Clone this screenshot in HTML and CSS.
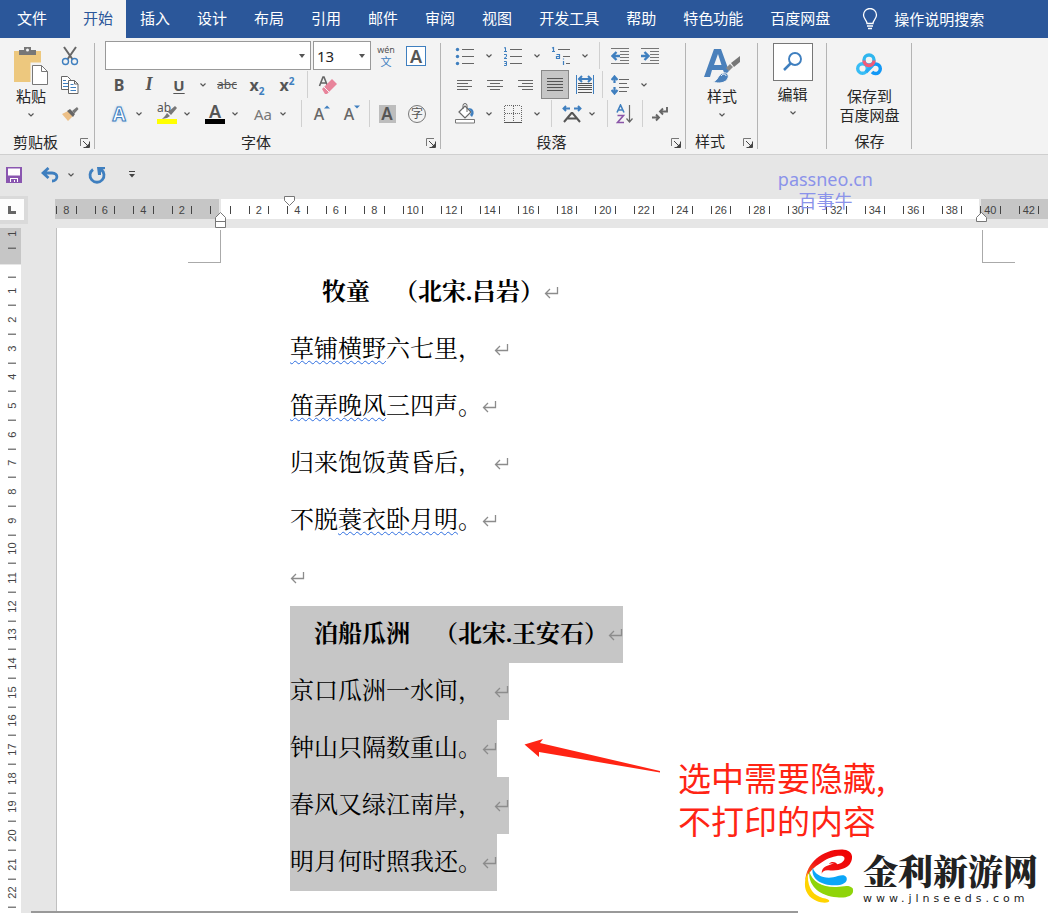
FILE: index.html
```html
<!DOCTYPE html>
<html lang="zh-CN">
<head>
    <meta charset="UTF-8">
    <meta name="viewport" content="width=device-width, initial-scale=1.0">
    <title>Word</title>
    <link rel="stylesheet" href="styles.css">
</head>
<body>

<!-- shared symbols -->
<svg class="symbols" width="0" height="0" aria-hidden="true">
    <symbol id="chevron" viewBox="0 0 6 4"><path d="M0.5 0.5 3 3 5.500 0.500" fill="none" stroke="#555" stroke-width="1.200"/></symbol>
    <symbol id="launcher" viewBox="0 0 10 10"><path d="M0.500 8V.5H8" fill="none" stroke="#777"/><path d="M3 3l5 5M9.500 3.500v6h-6" fill="none" stroke="#444"/><path d="M9 9H5.500L9 5.500z" fill="#444"/></symbol>
    <symbol id="pmark" viewBox="0 0 15 14"><path d="M13.500 1v6.500H1.500M6 3 1.500 7.500 6 12" fill="none" stroke="#8c8c8c" stroke-width="1.300"/></symbol>
</svg>

<nav class="tabs">
    <a class="tab file" href="#">文件</a>
    <a class="tab active" href="#">开始</a>
    <a class="tab" href="#">插入</a>
    <a class="tab" href="#">设计</a>
    <a class="tab" href="#">布局</a>
    <a class="tab" href="#">引用</a>
    <a class="tab" href="#">邮件</a>
    <a class="tab" href="#">审阅</a>
    <a class="tab" href="#">视图</a>
    <a class="tab" href="#">开发工具</a>
    <a class="tab" href="#">帮助</a>
    <a class="tab" href="#">特色功能</a>
    <a class="tab" href="#">百度网盘</a>
    <a class="tab tell-me" href="#">
        <svg width="16" height="22" viewBox="0 0 16 22" fill="none" stroke="#fff" stroke-width="1.300"><path d="M5 15.500C5 12 1.500 11 1.500 7a6.500 6.500 0 0 1 13 0c0 4-3.500 5-3.500 8.500zM5 18h6M6 20.500h4"/></svg>
        操作说明搜索
    </a>
</nav>

<div class="ribbon">
    <section class="group clipboard">
        <div class="tools">
            <button class="big" type="button">
                <svg width="36" height="40" viewBox="0 0 36 40"><path d="M1 5h27v31H1z" fill="#edc87e"/><path d="M6 9V4h5V1h7v3h5v5z" fill="#777"/><circle cx="14.500" cy="4" r="1.500" fill="#f3f3f3"/><path d="M19 18h10l6 6v15H19z" fill="#fff" stroke="#f3f3f3" stroke-width="3"/><path d="M19.500 19.500h9l6 6v13h-15zM28.500 19.500v6h6" fill="#fff" stroke="#777"/></svg>
                <span>粘贴</span>
                <svg class="chev" width="6" height="4"><use href="#chevron"/></svg>
            </button>
            <div class="stack">
                <button class="ic" type="button" aria-label="剪切"><svg width="18" height="20" viewBox="0 0 18 20"><path d="M3 1l9 13M15 1L6 14" stroke="#666" stroke-width="2"/><circle cx="4.500" cy="15.500" r="3" fill="#f3f3f3" stroke="#3f7fbf" stroke-width="1.400"/><circle cx="13.500" cy="15.500" r="3" fill="#f3f3f3" stroke="#3f7fbf" stroke-width="1.400"/></svg></button>
                <button class="ic" type="button" aria-label="复制"><svg width="18" height="18" viewBox="0 0 18 18" fill="#fff" stroke="#666"><path d="M.5.5h6l3 3v10h-9z"/><path d="M2 4.500h3M2 7.500h5M2 10.500h5" stroke="#3f7fbf"/><path d="M7.500 4.500h6l3.500 3.500v9.500H7.500zM13.500 4.500v3.500H17"/><path d="M9.500 8.500h3M9.500 11.500h5.500M9.500 14.500h5.500" stroke="#3f7fbf"/></svg></button>
                <button class="ic" type="button" aria-label="格式刷"><svg width="18" height="16" viewBox="0 0 18 16"><path d="M1 8l6-3 5 5-5 5z" fill="#edc087"/><path d="M6 5l3-2 5 5-2 3z" fill="#666"/><path d="M11 5l5-4 1.500 2-4 4.500z" fill="#777"/></svg></button>
            </div>
        </div>
        <div class="caption"><span>剪贴板</span><button class="launch" type="button" aria-label="剪贴板设置"><svg width="10" height="10"><use href="#launcher"/></svg></button></div>
    </section>

    <section class="group font">
        <div class="rows">
            <div class="row">
                <span class="combo name"><select aria-label="字体"><option></option></select></span>
                <span class="combo size"><select aria-label="字号"><option>13</option></select></span>
                <button class="ic pinyin" type="button"><small>wén</small><b>文</b></button>
                <button class="ic" type="button"><span class="boxed">A</span></button>
            </div>
            <div class="row">
                <button class="ic bold" type="button">B</button>
                <button class="ic italic" type="button">I</button>
                <button class="ic under" type="button">U</button>
                <button class="arrow" type="button" aria-label="下划线"><svg width="6" height="4"><use href="#chevron"/></svg></button>
                <button class="ic strike" type="button">abc</button>
                <button class="ic script" type="button"><span>x<sub>2</sub></span></button>
                <button class="ic script" type="button"><span>x<sup>2</sup></span></button>
                <i class="sep"></i>
                <button class="ic" type="button" aria-label="清除格式"><svg width="20" height="20" viewBox="0 0 20 20"><path d="M1.500 11L5 2h1l3.500 9M3 8h5" fill="none" stroke="#666" stroke-width="1.600"/><path d="M4 14l10-10 5 5-10 10H7z" fill="#e8849b"/><path d="M6 12l5 5" stroke="#f3f3f3"/></svg></button>
            </div>
            <div class="row tight">
                <button class="ic glow" type="button">A</button>
                <button class="arrow" type="button" aria-label="文本效果"><svg width="6" height="4"><use href="#chevron"/></svg></button>
                <button class="ic" type="button"><span class="marker">ab<svg width="15" height="13" viewBox="0 0 15 13"><path d="M6 6l7-6 2 2-6 7z" fill="#777"/><path d="M5 7l3 3-3 2-5 1 3-3z" fill="#777"/></svg></span></button>
                <button class="arrow" type="button" aria-label="突出显示颜色"><svg width="6" height="4"><use href="#chevron"/></svg></button>
                <button class="ic" type="button"><span class="color">A</span></button>
                <button class="arrow" type="button" aria-label="字体颜色"><svg width="6" height="4"><use href="#chevron"/></svg></button>
                <button class="ic case" type="button">Aa</button>
                <button class="arrow" type="button" aria-label="更改大小写"><svg width="6" height="4"><use href="#chevron"/></svg></button>
                <i class="sep"></i>
                <button class="ic grow" type="button">A<svg width="6" height="4" viewBox="0 0 6 4"><path d="M0 3.500 3 .5l3 3z" fill="#3f7fbf"/></svg></button>
                <button class="ic grow" type="button">A<svg width="6" height="4" viewBox="0 0 6 4"><path d="M0 .5l3 3 3-3z" fill="#3f7fbf"/></svg></button>
                <i class="sep narrow"></i>
                <button class="ic" type="button"><span class="shade">A</span></button>
                <button class="ic" type="button"><span class="circled">字</span></button>
            </div>
        </div>
        <div class="caption"><span>字体</span><button class="launch" type="button" aria-label="字体设置"><svg width="10" height="10"><use href="#launcher"/></svg></button></div>
    </section>

    <section class="group paragraph">
        <div class="rows">
            <div class="row">
                <button class="ic" type="button" aria-label="项目符号"><svg width="20" height="20" viewBox="0 0 20 20"><path d="M7 3.500h12M7 10.500h12M7 17.500h12" stroke="#666"/><g fill="#3f7fbf"><circle cx="2.500" cy="3.500" r="1.700"/><circle cx="2.500" cy="10.500" r="1.700"/><circle cx="2.500" cy="17.500" r="1.700"/></g></svg></button>
                <button class="arrow" type="button" aria-label="项目符号库"><svg width="6" height="4"><use href="#chevron"/></svg></button>
                <button class="ic" type="button" aria-label="编号"><svg width="20" height="20" viewBox="0 0 20 20"><path d="M7 3.500h12M7 10.500h12M7 17.500h12" stroke="#666"/><path d="M1 2l1.500-.5V5M1 5.500h3M1 8.500h2.500v2L1 12.500h3M1 15.500h2.500v4H1M1.500 17.500h2" fill="none" stroke="#3f7fbf"/></svg></button>
                <button class="arrow" type="button" aria-label="编号库"><svg width="6" height="4"><use href="#chevron"/></svg></button>
                <button class="ic" type="button" aria-label="多级列表"><svg width="20" height="20" viewBox="0 0 20 20"><path d="M7 3.500h12M12 10.500h7M15 17.500h4" stroke="#666"/><path d="M1 2l1.500-.5V5M1 5.500h3M5.500 8.500h3v4h-3v-2h3M12.500 15v4M12.500 12.500v1" fill="none" stroke="#3f7fbf" stroke-width="1.200"/></svg></button>
                <button class="arrow" type="button" aria-label="多级列表库"><svg width="6" height="4"><use href="#chevron"/></svg></button>
                <i class="sep"></i>
                <button class="ic" type="button" aria-label="减少缩进"><svg width="18" height="18" viewBox="0 0 18 18"><path d="M0 1.500h18M9 4.500h9M9 7.500h9M9 10.500h9M9 13.500h9M0 16.500h18" stroke="#777"/><path d="M9 9H2M5.500 5L1.500 9l4 4" fill="none" stroke="#3f7fbf" stroke-width="2.400"/></svg></button>
                <button class="ic" type="button" aria-label="增加缩进"><svg width="18" height="18" viewBox="0 0 18 18"><path d="M0 1.500h18M9 4.500h9M9 7.500h9M9 10.500h9M9 13.500h9M0 16.500h18" stroke="#777"/><path d="M0 9h7M3.500 5l4 4-4 4" fill="none" stroke="#3f7fbf" stroke-width="2.400"/></svg></button>
            </div>
            <div class="row">
                <button class="ic" type="button" aria-label="左对齐"><svg width="16" height="12" viewBox="0 0 16 12"><path d="M0 1.500h15M0 4.500h11M0 7.500h15M0 10.500h11" stroke="#666"/></svg></button>
                <button class="ic" type="button" aria-label="居中"><svg width="16" height="12" viewBox="0 0 16 12"><path d="M0 1.500h16M3 4.500h10M0 7.500h16M3 10.500h10" stroke="#666"/></svg></button>
                <button class="ic" type="button" aria-label="右对齐"><svg width="16" height="12" viewBox="0 0 16 12"><path d="M1 1.500h15M5 4.500h11M1 7.500h15M5 10.500h11" stroke="#666"/></svg></button>
                <button class="ic pressed" type="button" aria-label="两端对齐"><svg width="16" height="14" viewBox="0 0 16 14"><path d="M0 .5h16M0 3.500h16M0 6.500h16M0 9.500h16M0 12.500h16" stroke="#555"/></svg></button>
                <button class="ic" type="button" aria-label="分散对齐"><svg width="18" height="19" viewBox="0 0 18 19"><path d="M.5 0v19M17.500 0v19" stroke="#3f7fbf"/><path d="M2 8.500h14M2 10.500h14M2 12.500h14M2 14.500h14M2 17.500h14" stroke="#555"/><path d="M3 4h12M6 1L3 4l3 3M12 1l3 3-3 3" fill="none" stroke="#3f7fbf" stroke-width="2"/></svg></button>
                <i class="sep narrow"></i>
                <button class="ic" type="button" aria-label="行距"><svg width="18" height="20" viewBox="0 0 18 20"><path d="M8 4.500h10M8 8.500h8M8 12.500h10M8 16.500h8" stroke="#666"/><path d="M3.500 2v6M3.500 12v6M.5 5l3-3.500 3 3.500M.5 15l3 3.500 3-3.500" fill="none" stroke="#3f7fbf" stroke-width="2.200"/></svg></button>
                <button class="arrow" type="button" aria-label="行距选项"><svg width="6" height="4"><use href="#chevron"/></svg></button>
            </div>
            <div class="row">
                <button class="ic" type="button" aria-label="底纹"><svg width="21" height="21" viewBox="0 0 21 21"><path d="M.5 16.500h19v3.500H.5z" fill="#fff" stroke="#777"/><path d="M4 9l6-6 6 6-6 6z" fill="#fff" stroke="#666" stroke-width="1.200"/><path d="M8 6V2.500a2 2 0 0 1 4 0V9" fill="none" stroke="#666"/><path d="M13 5c5 0 6 3 5.500 6L17 14l-2-2 1.500-3z" fill="#3f7fbf"/></svg></button>
                <button class="arrow" type="button" aria-label="底纹颜色"><svg width="6" height="4"><use href="#chevron"/></svg></button>
                <button class="ic" type="button" aria-label="边框"><svg width="18" height="18" viewBox="0 0 18 18"><path d="M1 .5h16M.5 1v16M17.500 1v16M9.500 1v16M1 8.500h16" stroke="#666" stroke-dasharray="1 1"/><path d="M0 17.500h18" stroke="#555"/></svg></button>
                <button class="arrow" type="button" aria-label="边框选项"><svg width="6" height="4"><use href="#chevron"/></svg></button>
                <i class="sep"></i>
                <button class="ic" type="button" aria-label="中文版式"><svg width="20" height="18" viewBox="0 0 20 18"><path d="M2 17l7.500-9h1L18 17M5.500 13.500h9" fill="none" stroke="#555" stroke-width="2"/><path d="M8 3.500H2M4 1L1.500 3.500 4 6M12 3.500h6M16 1l2.500 2.500L16 6" fill="none" stroke="#3f7fbf" stroke-width="1.900"/></svg></button>
                <button class="arrow pull" type="button" aria-label="中文版式选项"><svg width="6" height="4"><use href="#chevron"/></svg></button>
                <i class="sep narrow"></i>
                <button class="ic" type="button" aria-label="排序"><svg width="18" height="20" viewBox="0 0 18 20" fill="none" stroke-width="1.600"><path d="M1 8.500L4.500 1 8 8.500M2 6h5" stroke="#3f7fbf"/><path d="M1.500 11.500h6l-6 7h6.500" stroke="#8a56a8"/><path d="M13.500 1v17M10.500 14.500l3 3.500 3-3.500" stroke="#666" stroke-width="1.200"/></svg></button>
                <i class="sep narrow"></i>
                <button class="ic" type="button" aria-label="显示编辑标记"><svg width="18" height="16" viewBox="0 0 18 16" fill="none" stroke="#666" stroke-width="1.900"><path d="M16 1v4.500H9M12 2.500l-3 3 3 3M1 11.500h7M5 8.500l3 3-3 3"/></svg></button>
            </div>
        </div>
        <div class="caption"><span>段落</span><button class="launch" type="button" aria-label="段落设置"><svg width="10" height="10"><use href="#launcher"/></svg></button></div>
    </section>

    <section class="group styles">
        <div class="tools">
            <button class="big" type="button">
                <svg width="36" height="40" viewBox="0 0 36 40"><path d="M0 31L10 3h7l8 22-4 4-2-5H8l-2 7zM10 19h7.500L14 8z" fill="#4a80bb"/><path d="M22 22l4-4 3 3-4 4z" fill="#888"/><path d="M27 17l9-7v6l-6 5z" fill="#777"/><path d="M9 36c5-1 5-8 10-9 4-1 6 2 5 5-2 5-9 6-15 4z" fill="#4a80bb" stroke="#f3f3f3"/><path d="M17 30c2-3 5-2 5 0" fill="none" stroke="#fff"/></svg>
                <span>样式</span>
                <svg class="chev" width="6" height="4"><use href="#chevron"/></svg>
            </button>
        </div>
        <div class="caption"><span>样式</span><button class="launch" type="button" aria-label="样式设置"><svg width="10" height="10"><use href="#launcher"/></svg></button></div>
    </section>

    <section class="group editing">
        <div class="tools">
            <button class="big find" type="button">
                <svg class="framed" width="40" height="38" viewBox="0 0 40 38"><circle cx="22" cy="16" r="6" fill="none" stroke="#3f7fbf" stroke-width="1.900"/><path d="M17.500 20.500L11 27" stroke="#3f7fbf" stroke-width="2.500"/></svg>
                <span>编辑</span>
                <svg class="chev" width="6" height="4"><use href="#chevron"/></svg>
            </button>
        </div>
    </section>

    <section class="group save">
        <div class="tools">
            <button class="big" type="button">
                <svg width="28" height="40" viewBox="0 0 28 40" fill="none" stroke-width="3.400"><circle cx="7.500" cy="22.500" r="4.800" stroke="#38bdf5"/><path d="M17 19.500a4.800 4.800 0 1 1 0 6.500" stroke="#1298f6"/><path d="M11 26l6.500-6.500" stroke="#25abf5"/><circle cx="14" cy="14" r="5" stroke="#2fb6ee"/><path d="M9 14.500a5 5 0 0 0 10 0" stroke="#f25a78"/></svg>
                <span>保存到<br>百度网盘</span>
            </button>
        </div>
        <div class="caption"><span>保存</span></div>
    </section>
</div>

<div class="quick">
    <button class="ic" type="button" aria-label="保存文件"><svg width="16" height="16" viewBox="0 0 16 16"><path d="M0 0h16v16H0z" fill="#8a56b0"/><path d="M2 1.500h12v7H2zM4 11h8v4H4z" fill="#fff"/><path d="M5 12h6v3H9v-2H8v2H5z" fill="#8a56b0"/></svg></button>
    <button class="ic undo" type="button" aria-label="撤消"><svg width="18" height="16" viewBox="0 0 18 16"><path d="M2 6h9c7 0 6 8 0 8M7.500 1L2 6l5.500 5" fill="none" stroke="#3f7fbf" stroke-width="2.800"/></svg></button>
    <button class="arrow" type="button" aria-label="撤消列表"><svg width="6" height="4"><use href="#chevron"/></svg></button>
    <button class="ic" type="button" aria-label="重复"><svg width="18" height="18" viewBox="0 0 18 18"><path d="M5 3.500a7 7 0 1 0 8 0" fill="none" stroke="#3f7fbf" stroke-width="2.800"/><path d="M9 1h8v2l-4 1v5H10z" fill="#3f7fbf"/></svg></button>
    <button class="ic more" type="button" aria-label="自定义快速访问工具栏"><svg width="6" height="7" viewBox="0 0 6 7"><path d="M0 .5h6" stroke="#444"/><path d="M0 3h6L3 6.500z" fill="#444"/></svg></button>
</div>

<div class="ruler-row">
    <button class="corner" type="button" aria-label="制表符"><svg width="8" height="8" viewBox="0 0 8 8"><path d="M1.500 0v6.500H8" fill="none" stroke="#666" stroke-width="3"/></svg></button>
    <div class="ruler">
        <div class="scale">
            <span>8</span><span>6</span><span>4</span><span>2</span><span></span><span>2</span><span>4</span><span>6</span><span>8</span><span>10</span><span>12</span><span>14</span><span>16</span><span>18</span><span>20</span><span>22</span><span>24</span><span>26</span><span>28</span><span>30</span><span>32</span><span>34</span><span>36</span><span>38</span><span>40</span><span>42</span>
        </div>
        <svg class="stop first" width="12" height="11" viewBox="0 0 12 11"><path d="M.5.5h10v4l-5 5-5-5z" fill="#fff" stroke="#777"/></svg>
        <svg class="stop left" width="12" height="17" viewBox="0 0 12 17"><path d="M.5 15.500v-10l5-5 5 5v10zM.5 9.500h10" fill="#fff" stroke="#777"/></svg>
        <svg class="stop right" width="12" height="11" viewBox="0 0 12 11"><path d="M.5 9.500v-4l5-5 5 5v4z" fill="#fff" stroke="#777"/></svg>
        <div class="mark"><span>passneo.cn</span><span>百事牛</span></div>
    </div>
</div>

<main class="workspace">
    <div class="v-ruler">
        <div class="v-scale">
            <span>1</span><span></span><span>1</span><span>2</span><span>3</span><span>4</span><span>5</span><span>6</span><span>7</span><span>8</span><span>9</span><span>10</span><span>11</span><span>12</span><span>13</span><span>14</span><span>15</span><span>16</span><span>17</span><span>18</span><span>19</span><span>20</span><span>21</span><span>22</span>
        </div>
    </div>
    <div class="canvas">
        <article class="page">
            <div class="crops"><i></i><i></i></div>
            <div class="text">
                <h2 class="indent">牧童　（北宋.吕岩）<svg width="15" height="14"><use href="#pmark"/></svg></h2>
                <p><u>草铺横野</u>六七里，  <svg width="15" height="14"><use href="#pmark"/></svg></p>
                <p><u>笛弄晚风</u>三四声。<svg width="15" height="14"><use href="#pmark"/></svg></p>
                <p>归来饱饭黄昏后，  <svg width="15" height="14"><use href="#pmark"/></svg></p>
                <p>不脱<u>蓑衣卧月明</u>。<svg width="15" height="14"><use href="#pmark"/></svg></p>
                <p><svg width="15" height="14"><use href="#pmark"/></svg></p>
                <h2 class="selected">　泊船瓜洲　（北宋.王安石）<svg width="15" height="14"><use href="#pmark"/></svg></h2>
                <p class="selected">京口瓜洲一水间，  <svg width="15" height="14"><use href="#pmark"/></svg></p>
                <p class="selected">钟山只隔数重山。<svg width="15" height="14"><use href="#pmark"/></svg></p>
                <p class="selected">春风又绿江南岸，  <svg width="15" height="14"><use href="#pmark"/></svg></p>
                <p class="selected">明月何时照我还。<svg width="15" height="14"><use href="#pmark"/></svg></p>
            </div>
            <svg class="pointer" width="137" height="36" viewBox="0 0 137 36"><path d="M.5 6.500L19 1l-3 4 120 28v1.500L15 14v5z" fill="#ff2414"/></svg>
            <div class="note">选中需要隐藏,<br>不打印的内容</div>
        </article>
        <div class="edge"></div>
        <div class="logo">
            <svg width="50" height="54" viewBox="0 0 150 162">
                <defs><linearGradient id="flame" x1="0" y1="1" x2="1" y2="0"><stop offset="0" stop-color="#ff7a1a"/><stop offset=".4" stop-color="#f01414"/><stop offset="1" stop-color="#f00000"/></linearGradient></defs>
                <path d="M4 96C6 40 60-2 120 2c30 3 28 30 16 45-13 16-44 18-66 17-10 0-14 5-17 10 0-12 4-18 13-22l24-9-16 1c9-8 20-6 26 2 12-2 26-14 20-22-8-9-44 0-64 14C27 56 12 70 4 96z" fill="url(#flame)"/>
                <path d="M12 70c-4 46 16 70 44 77 12 2 20 5 20 9-2 7-24 6-38 0C2 141-6 106 12 70z" fill="#ffd400"/>
                <path d="M16 66c8 34 42 50 82 48 18-1 37-8 48 4 7 22-17 30-47 27C43 141 11 106 16 66z" fill="#8fd40a"/>
                <path d="M26 56c8 22 32 34 62 29 14-3 32-13 40 1 3 14-11 23-38 23C54 108 20 92 26 56z" fill="#0ba6f8"/>
            </svg>
            <div class="logo-text"><strong>金利新游网</strong><span>www.jlnseeds.com</span></div>
        </div>
    </div>
</main>

</body>
</html>
```

FILE: styles.css
```css
* {
    box-sizing: border-box;
}
body {
    margin: 0;
    min-height: 100vh;
    display: flex;
    flex-direction: column;
    background-color: #e6e6e6;
    color: #262626;
    font-family: "Noto Sans CJK SC", sans-serif;
    font-size: 15px;
}
svg {
    display: block;
    flex: none;
}
.symbols {
    position: absolute;
}
button {
    padding: 0;
    border: none;
    background: none;
    color: inherit;
    font-family: inherit;
    font-size: 15px;
}

/* tabs */
.tabs {
    display: flex;
    gap: 1px;
    height: 38px;
    background-color: #2b579a;
}
.tab {
    padding: 0 13px;
    color: #fff;
    line-height: 36px;
    text-decoration: none;
    white-space: nowrap;
}
.file {
    width: 69px;
    padding: 0 17px;
}
.active {
    background-color: #f3f3f3;
    color: #2b579a;
}
.tell-me {
    display: flex;
    align-items: center;
    gap: 16px;
    padding-left: 18px;
}

/* ribbon */
.ribbon {
    display: flex;
    height: 117px;
    padding-top: 3px;
    background-color: #f3f3f3;
    border-bottom: 1px solid #cfcfcf;
}
.group {
    position: relative;
    display: flex;
    flex-direction: column;
    flex: none;
}
.group::after {
    content: "";
    position: absolute;
    top: 2px;
    right: 0;
    width: 1px;
    height: 106px;
    background-color: #b4b4b4;
}
.clipboard { width: 95px; }
.font { width: 346px; }
.paragraph { width: 245px; }
.styles { width: 72px; }
.editing { width: 69px; }
.save { width: 85px; }
.tools {
    display: flex;
    justify-content: center;
    height: 87px;
}
.rows {
    padding-left: 9px;
}
.row {
    display: flex;
    align-items: center;
    height: 29px;
}
.caption {
    display: flex;
    align-items: center;
    height: 27px;
}
.caption span {
    flex: 1;
    text-align: center;
}
.launch {
    width: 24px;
    display: flex;
    justify-content: center;
    padding: 4px 0 0 4px;
}
.ic {
    width: 30px;
    height: 29px;
    display: flex;
    align-items: center;
    justify-content: center;
    flex: none;
    color: #555;
    font-family: "Noto Sans", "Noto Sans CJK SC", sans-serif;
}
.arrow {
    width: 18px;
    height: 29px;
    display: flex;
    align-items: center;
    justify-content: center;
}
.tight .arrow,
.pull {
    margin: 0 4px 0 -4px;
}
.sep {
    width: 1px;
    height: 27px;
    margin: 0 5px;
    background-color: #d0d0d0;
}
.narrow {
    margin: 0 2px;
}
.big {
    display: flex;
    flex-direction: column;
    align-items: center;
    padding-top: 5px;
    line-height: 19px;
}
.chev {
    margin-top: 8px;
}
.clipboard .tools {
    justify-content: flex-start;
    padding-left: 13px;
    gap: 6px;
}
.find {
    padding-top: 2px;
    gap: 3px;
}
.find .chev {
    margin-top: 5px;
}
.framed {
    background-color: #fff;
    outline: 1px solid #777;
    outline-offset: -1px;
}

/* font tools */
.combo {
    position: relative;
    height: 29px;
    margin-right: 2px;
}
.combo::after {
    content: "";
    position: absolute;
    right: 6px;
    top: 13px;
    border: 3px solid transparent;
    border-top: 4px solid #555;
}
.combo select {
    width: 100%;
    height: 29px;
    padding: 0 3px;
    appearance: none;
    border: 1px solid #999;
    border-radius: 0;
    background-color: #fff;
    color: #262626;
    font-family: "Noto Sans", sans-serif;
    font-size: 15px;
}
.name {
    width: 206px;
    margin-left: 1px;
}
.size {
    width: 58px;
    margin-right: 0;
}
.pinyin {
    flex-direction: column;
    line-height: 12px;
}
.pinyin small {
    font-size: 9px;
}
.pinyin b {
    color: #3f7fbf;
    font-size: 11px;
    font-weight: 400;
}
.boxed {
    width: 20px;
    height: 20px;
    border: 1px solid #3f7fbf;
    background-color: #fff;
    font-size: 18px;
    font-weight: 600;
    line-height: 18px;
}
.bold {
    font-weight: 700;
    font-size: 16px;
}
.italic {
    font-family: "Liberation Serif", serif;
    font-style: italic;
    font-weight: 700;
    font-size: 18px;
}
.under {
    font-weight: 700;
    text-decoration: underline 1px;
    text-underline-offset: 2px;
}
.strike {
    font-size: 12px;
    text-decoration: line-through;
}
.script {
    font-size: 16px;
    font-weight: 700;
}
.script sub,
.script sup {
    color: #3f7fbf;
    font-size: 10px;
    line-height: 0;
}
.glow {
    color: #fff;
    font-size: 19px;
    font-weight: 700;
    -webkit-text-stroke: 1px #3f7fbf;
    text-shadow: 0 0 3px #7fb4e6;
}
.marker,
.color {
    position: relative;
    width: 20px;
    height: 20px;
    border-bottom: 5px solid #ff0;
    font-size: 12px;
    line-height: 8px;
    text-align: left;
}
.marker svg {
    position: absolute;
    right: 0;
    top: 2px;
}
.color {
    border-color: #000;
    font-size: 18px;
    font-weight: 600;
    line-height: 14px;
    text-align: center;
}
.case {
    color: #777;
    font-size: 15px;
}
.grow {
    color: #666;
    font-size: 16px;
    font-weight: 500;
}
.grow svg {
    align-self: flex-start;
    margin-top: 6px;
}
.shade {
    width: 17px;
    height: 18px;
    background-color: #bdbdbd;
    font-size: 17px;
    font-weight: 600;
    line-height: 18px;
}
.circled {
    width: 18px;
    height: 18px;
    border: 1px solid #777;
    border-radius: 50%;
    font-size: 12px;
    line-height: 16px;
}
.pressed {
    width: 28px;
    margin: 0 1px;
    border: 1px solid #888;
    background-color: #c6c6c6;
}

/* quick access bar */
.quick {
    display: flex;
    align-items: center;
    height: 41px;
    padding-bottom: 2px;
}
.quick .ic:first-child {
    width: 28px;
}
.undo {
    margin-left: 7px;
}
.quick .arrow {
    margin: 0 2px 0 -3px;
}
.more {
    margin-left: 5px;
}

/* rulers */
.ruler-row {
    display: flex;
    align-items: flex-start;
    height: 32px;
}
.corner {
    width: 28px;
    height: 28px;
    display: flex;
    align-items: center;
    justify-content: center;
    border: solid #dadada;
    border-width: 3px 4px 4px 0;
    background-color: #fdfdfd;
}
.ruler {
    position: relative;
    flex: 1;
    height: 20px;
    margin: 3px 0 0 27px;
    background: linear-gradient(to right, #c6c6c6 164px, #e6e6e6 164px, #e6e6e6 166px, #fff 166px, #fff calc(100% - 69px), #e6e6e6 calc(100% - 69px), #e6e6e6 calc(100% - 67px), #c6c6c6 calc(100% - 67px));
}
.scale {
    display: flex;
    margin: 0 0 0 -8px;
    padding-top: 7px;
    color: #444;
    font: 11px/8px "Liberation Sans", sans-serif;
}
.scale span {
    flex: 1;
    display: flex;
    justify-content: space-between;
    height: 8px;
    padding: 0 9px;
}
.scale span::before,
.scale span::after {
    content: "";
    width: 1px;
    height: 8px;
    background-color: #444;
}
.stop {
    position: absolute;
}
.first {
    left: 229px;
    top: -3px;
}
.left {
    left: 160px;
    top: 13px;
}
.right {
    right: 60px;
    top: 13px;
}
.mark {
    position: absolute;
    right: 175px;
    top: -31px;
    display: flex;
    flex-direction: column;
    align-items: center;
    color: #8b93ea;
    font: 18px/22px "Noto Sans", "Noto Sans CJK SC", sans-serif;
}
.workspace {
    flex: 1;
    display: flex;
}
.v-ruler {
    width: 21px;
    display: flex;
    background: linear-gradient(#c6c6c6 36px, #e6e6e6 36px, #e6e6e6 37px, #fff 37px);
}
.v-scale {
    flex: 1;
    display: flex;
    flex-direction: column;
    align-items: center;
    margin: -8px 0 5px 3px;
    color: #444;
    font: 11px/12px "Liberation Sans", sans-serif;
}
.v-scale span {
    flex: 1;
    width: 8px;
    display: flex;
    align-items: center;
    justify-content: center;
    border-top: 1px solid #444;
    writing-mode: vertical-rl;
    transform: rotate(180deg);
}

/* document */
.canvas {
    position: relative;
    flex: 1;
    display: flex;
    flex-direction: column;
    padding-left: 10px;
}
.page {
    position: relative;
    flex: 1;
    margin-left: 25px;
    background-color: #fff;
    border-left: 1px solid #c0c0c0;
}
.crops {
    display: flex;
    justify-content: space-between;
    padding: 2px 33px 0 131px;
}
.crops i {
    width: 33px;
    height: 33px;
    border: solid #aaa;
    border-width: 0 1px 1px 0;
}
.crops i:last-child {
    border-width: 0 0 1px 1px;
}
.text {
    padding: 1px 0 0 233px;
    color: #000;
    font-family: "Liberation Serif", "Noto Serif CJK SC", "Noto Sans CJK SC", serif;
    line-height: 57px;
    text-spacing-trim: space-all;
}
.text h2,
.text p {
    width: fit-content;
    height: 57px;
    display: flex;
    align-items: center;
    margin: 0;
    font-size: 24px;
    font-weight: 400;
    white-space: pre;
}
.text h2 {
    font-weight: 700;
}
.text .indent {
    padding-left: 32px;
}
.text u {
    text-decoration: underline wavy #2f6fe0 1px;
    text-underline-offset: 3px;
}
.selected {
    background-color: #c6c6c6;
}
.pointer {
    position: absolute;
    left: 467px;
    top: 510px;
}
.note {
    position: absolute;
    left: 621px;
    top: 528px;
    color: #ff2414;
    font-size: 33px;
    line-height: 43px;
}
.edge {
    height: 2px;
    background-color: #999;
}
.logo {
    position: absolute;
    right: 0;
    bottom: 0;
    display: flex;
    gap: 9px;
    padding: 0 10px 6px 6px;
    background-color: #fff;
}
.logo-text {
    display: flex;
    flex-direction: column;
    color: #222;
}
.logo-text strong {
    font-family: "Noto Serif CJK SC", "Noto Sans CJK SC", serif;
    font-size: 35px;
    font-weight: 900;
    line-height: 42px;
}
.logo-text span {
    font: 11px/16px "DejaVu Sans", sans-serif;
    letter-spacing: 4px;
}
```
